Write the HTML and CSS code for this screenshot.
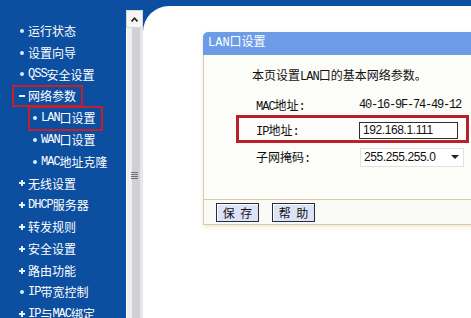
FILE: index.html
```html
<!DOCTYPE html>
<html lang="zh-CN">
<head>
    <meta charset="UTF-8">
    <title>LAN口设置</title>
    <link rel="stylesheet" href="styles.css">
</head>
<body>
    <div class="frame">
        <nav class="menu">
            <div class="item"><i class="dot"></i>运行状态</div>
            <div class="item"><i class="dot"></i>设置向导</div>
            <div class="item"><i class="dot"></i><span class="en">QSS</span>安全设置</div>
            <div class="item mark"><i class="minus"></i>网络参数</div>
            <div class="item sub mark lan"><i class="dot"></i><span class="en">LAN</span>口设置</div>
            <div class="item sub"><i class="dot"></i><span class="en">WAN</span>口设置</div>
            <div class="item sub"><i class="dot"></i><span class="en">MAC</span>地址克隆</div>
            <div class="item"><i class="plus"></i>无线设置</div>
            <div class="item"><i class="plus"></i><span class="en">DHCP</span>服务器</div>
            <div class="item"><i class="plus"></i>转发规则</div>
            <div class="item"><i class="plus"></i>安全设置</div>
            <div class="item"><i class="plus"></i>路由功能</div>
            <div class="item"><i class="dot"></i><span class="en">IP</span>带宽控制</div>
            <div class="item"><i class="plus"></i><span class="en">IP</span>与<span class="en">MAC</span>绑定</div>
        </nav>

        <div class="scroll">
            <div class="arrow">
                <svg width="7" height="5" viewBox="0 0 7 5"><path d="M0.5 4.5 L3.5 1.2 L6.5 4.5" fill="none" stroke="#222" stroke-width="1.6"/></svg>
            </div>
            <div class="thumb"><span class="grip"></span></div>
        </div>

        <main class="main">
            <div class="sheet">
                <section class="panel">
                    <h2 class="panel-title">LAN口设置</h2>
                    <div class="panel-body">
                        <p class="intro">本页设置<span class="en">LAN</span>口的基本网络参数。</p>
                        <div class="fields">
                            <div class="row first">
                                <span class="label"><span class="en">MAC</span>地址:</span>
                                <span class="mac">40-16-9F-74-49-12</span>
                            </div>
                            <div class="row ip">
                                <span class="label"><span class="en">IP</span>地址:</span>
                                <span class="input">192.168.1.111</span>
                            </div>
                            <div class="row">
                                <span class="label">子网掩码:</span>
                                <span class="select">255.255.255.0<i class="caret"></i></span>
                            </div>
                        </div>
                    </div>
                    <div class="panel-foot">
                        <button class="btn">保 存</button>
                        <button class="btn">帮 助</button>
                    </div>
                </section>
                <div class="watermark">Bai<span class="orange">du</span></div>
            </div>
        </main>
    </div>
</body>
</html>
```

FILE: styles.css
```css
html, body {
    margin: 0;
}
body {
    width: 471px;
    height: 318px;
    overflow: hidden;
    background: #0c4ea0;
    font: 12px "Liberation Mono", "Noto Sans CJK SC", monospace;
}
.frame {
    display: flex;
    height: 318px;
}

/* left menu */
.menu {
    width: 126px;
    flex: none;
    box-sizing: border-box;
    padding-top: 20px;
    color: #fff;
}
.item {
    display: flex;
    align-items: center;
    width: fit-content;
    height: 21.8px;
    box-sizing: border-box;
    margin-left: 12px;
    padding: 0 5px 0 6px;
    border: 2px solid transparent;
    white-space: nowrap;
}
.item.sub {
    margin-left: 28px;
    padding-left: 3px;
}
.item.mark {
    border-color: #c4202c;
}
.item.lan {
    height: 25px;
    margin-top: -1.6px;
    margin-bottom: -1.6px;
}
.en {
    letter-spacing: -1px;
}
.dot {
    width: 4px;
    height: 4px;
    border-radius: 50%;
    background: #d4eeff;
    margin-right: 4px;
    flex: none;
}
.plus {
    width: 6px;
    height: 6px;
    margin: 0 3px 0 -1px;
    flex: none;
    background:
        linear-gradient(#e4f4ff, #e4f4ff) center / 6px 2px no-repeat,
        linear-gradient(#e4f4ff, #e4f4ff) center / 2px 6px no-repeat;
}
.minus {
    width: 6px;
    height: 2px;
    margin: 0 3px 0 -1px;
    flex: none;
    background: #f0f8ff;
}

/* scrollbar */
.scroll {
    width: 17px;
    flex: none;
    margin-top: 10px;
    display: flex;
    flex-direction: column;
    background: #fff;
}
.arrow {
    height: 18px;
    box-sizing: border-box;
    border: 1px solid #d8d8d8;
    background: #f6f6f4;
    display: flex;
    align-items: center;
    justify-content: center;
}
.thumb {
    flex: 1;
    display: flex;
    justify-content: center;
    background: linear-gradient(90deg, #fff 0 1px, #efefef 1px 6px, #cfcfd4 6px 14px, #e6e6e8 14px);
}
.grip {
    width: 7px;
    height: 8px;
    margin-top: 144px;
    background: repeating-linear-gradient(#6e6e74 0 1px, transparent 1px 2px);
}

/* main area */
.main {
    flex: 1;
    min-width: 0;
    padding-top: 6px;
    overflow: hidden;
}
.sheet {
    height: 100%;
    box-sizing: border-box;
    background: #fff;
    border-top-left-radius: 26px;
    padding: 26px 0 0 60px;
}
.panel {
    width: 300px;
    box-shadow: 0 2px 4px rgba(214, 196, 150, 0.35);
}
.panel-title {
    margin: 0;
    height: 23px;
    line-height: 23px;
    padding-left: 5px;
    background: #6d9ce6;
    color: #fff;
    font-size: 12px;
    font-weight: normal;
    border-top-left-radius: 5px;
}
.panel-body {
    background: #fcfcf8;
    border-left: 1px solid #d8cba8;
    padding: 14px 0 28px;
    color: #111;
}
.intro {
    margin: 0 0 0 48px;
    line-height: 16px;
}
.fields {
    margin-top: 10px;
}
.row {
    display: flex;
    align-items: center;
    width: 233px;
    height: 28px;
    box-sizing: border-box;
    margin-left: 32px;
    padding-left: 17px;
    border: 3px solid transparent;
}
.row.first {
    height: 20px;
    border-width: 0 3px;
}
.row.ip {
    border-color: #b8202a;
    height: 28px;
    padding-top: 2px;
}
.label {
    width: 103px;
    flex: none;
}
.mac {
    letter-spacing: -1.2px;
}
.input, .select {
    display: flex;
    align-items: center;
    box-sizing: border-box;
    font: 12px "Liberation Sans", Arial, sans-serif;
    letter-spacing: -0.4px;
    color: #111;
    padding-left: 3px;
}
.input {
    width: 99px;
    height: 17px;
    border: 1px solid #2c2c2c;
    background: #fff;
}
.select {
    width: 104px;
    height: 19px;
    border: 1px solid #e2e2e2;
    background: #fff;
    margin-left: 1px;
}
.caret {
    margin-left: auto;
    margin-right: 4px;
    width: 0;
    height: 0;
    border-left: 4px solid transparent;
    border-right: 4px solid transparent;
    border-top: 4px solid #222;
}
.panel-foot {
    display: flex;
    gap: 13px;
    padding: 3px 0 2px 12px;
    background: #fafaf6;
    border: 1px solid #d8cba8;
    border-right: none;
}
.btn {
    width: 43px;
    height: 19px;
    padding: 0;
    font: 12px "Noto Sans CJK SC", sans-serif;
    word-spacing: 3px;
    color: #111;
    background: #dce3f6;
    border: 1px solid #2a2a3a;
    box-shadow: inset 1px 1px #fff;
}
.watermark {
    margin: 88px 0 0 127px;
    font: bold 28px "Liberation Sans", sans-serif;
    color: #d6dce6;
}
.orange {
    color: #f5dcae;
}
```
